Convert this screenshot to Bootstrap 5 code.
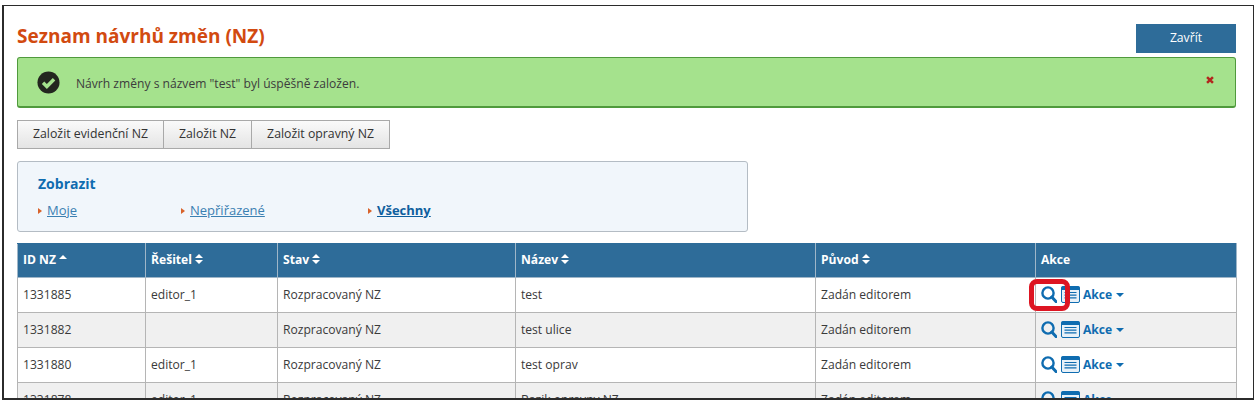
<!DOCTYPE html>
<html lang="cs">
<head>
  <meta charset="UTF-8" />
  <meta name="viewport" content="width=device-width, initial-scale=1.0"/>
  <title>Seznam návrhů změn</title>
  <link href="https://cdn.jsdelivr.net/npm/bootstrap@5.3.3/dist/css/bootstrap.min.css" rel="stylesheet" />
  <style>
    html, body { height: 403px; overflow: hidden; }
    body {
      background: #fff;
      font-family: "Open Sans", sans-serif;
      font-size: 12.1px;
      color: #333;
      padding: 5px 4px 3px 2px;
    }
    .frame {
      height: 395px;
      border: 1px solid #2b2b2b;
      border-width: 1px 1px 2px 2px;
      padding: 18px 17px 0 13px;
      overflow: hidden;
    }
    .page-title {
      font-size: 19px;
      font-weight: 700;
      color: #d24a10;
      margin: 0;
      line-height: 24px;
    }
    .close-btn {
      width: 100px;
      height: 29px;
      background: #2e6c99;
      color: #fff;
      border: 0;
      border-radius: 0;
      font-size: 12.2px;
      padding: 0;
    }
    .ok-alert {
      height: 51px;
      margin: 4px 0 12px;
      background: #a5e28d;
      border: 1px solid #4f9a3c;
      border-bottom-width: 2px;
      border-radius: 3px;
      padding: 0 21px 0 19px;
      color: #3c3c3c;
    }
    .ok-alert svg { flex: none; }
    .ok-text { margin-left: 16px; padding-top: 4px; }
    .ok-close { margin-bottom: 5px; }
    .add-group .btn {
      height: 29px;
      padding: 0 15px;
      font-size: 12.3px;
      color: #333;
      background: linear-gradient(#fafafa, #e4e4e4);
      border: 1px solid #a9a9a9;
      border-radius: 0;
    }
    .add-group .btn + .btn { margin-left: -1px; }
    .filter-box {
      width: 731px;
      height: 71px;
      margin: 12px 0 11px;
      background: #f1f6fb;
      border: 1px solid #b4bcc4;
      border-radius: 3px;
      padding: 13px 20px 0;
    }
    .filter-title {
      font-size: 14px;
      font-weight: 700;
      color: #0f6cb0;
      line-height: 18px;
      margin-bottom: 8px;
    }
    .filter-item { font-size: 13px; line-height: 18px; }
    .filter-item a { color: #3b80b2; }
    .filter-item a.active-link { color: #0f5f9e; font-weight: 700; }
    .filter-item::before {
      content: "";
      display: inline-block;
      border-left: 4px solid #d8622a;
      border-top: 3px solid transparent;
      border-bottom: 3px solid transparent;
      margin-right: 5px;
      vertical-align: 1px;
    }
    .w-first { width: 143px; }
    .w-second { width: 187px; }
    .nz-table {
      table-layout: fixed;
      width: 1219px;
      margin: 0;
      font-size: 12.1px;
      color: #3a3a3a;
      border-collapse: collapse;
    }
    .nz-table th {
      background: #2e6c99;
      color: #fff;
      height: 34px;
      padding: 0 5px;
      font-weight: 700;
      border: 1px solid #9fb6c8;
      border-top-color: #2e6c99;
      vertical-align: middle;
    }
    .nz-table td {
      height: 35px;
      padding: 0 5px;
      border: 1px solid #b5b5b5;
      vertical-align: middle;
      background: #fff;
    }
    .nz-table tr.alt td { background: #f0f0f0; }
    .sort-ic { display: inline-block; margin-left: 0; vertical-align: 0; }
    .act-cell { position: relative; white-space: nowrap; }
    .act-link {
      color: #0f6cb0;
      font-weight: 700;
      text-decoration: none;
      margin-left: 3px;
    }
    .act-list { margin-left: 4px; }
    .act-caret {
      display: inline-block;
      border-top: 4px solid #0f6cb0;
      border-left: 4px solid transparent;
      border-right: 4px solid transparent;
      margin-left: 4px;
      margin-top: 1px;
    }
    .red-mark {
      position: absolute;
      left: -12px;
      top: -7px;
      width: 41px;
      height: 32px;
      border: 5px solid #dd1522;
      border-radius: 8px;
    }
  </style>
</head>
<body>
  <svg width="0" height="0" class="position-absolute">
    <symbol id="ic-search" viewBox="0 0 16 17">
      <circle cx="7" cy="7" r="5.6" fill="none" stroke="#0f6cb0" stroke-width="2.4"/>
      <path d="M10.8 11 15 15.6" stroke="#0f6cb0" stroke-width="3" stroke-linecap="round"/>
    </symbol>
    <symbol id="ic-list" viewBox="0 0 19 17">
      <rect x=".5" y=".5" width="18" height="16" rx="1.5" fill="#e8f1f8" stroke="#0f6cb0"/>
      <rect x=".5" y=".5" width="18" height="3.5" fill="#0f6cb0"/>
      <path d="M3.5 6.5h12M3.5 9.2h12M3.5 11.9h12" stroke="#0f6cb0" stroke-width="1.2"/>
    </symbol>
    <symbol id="ic-sort" viewBox="0 0 8 10">
      <path d="M4 0 8 4H0ZM0 6h8L4 10Z" fill="#fff"/>
    </symbol>
    <symbol id="ic-up" viewBox="0 0 8 10">
      <path d="M4 1 8 5H0Z" fill="#fff"/>
    </symbol>
  </svg>

  <div class="frame">
    <div class="d-flex justify-content-between align-items-start">
      <h1 class="page-title">Seznam návrhů změn (NZ)</h1>
      <button class="btn close-btn" type="button">Zavřít</button>
    </div>

    <div class="ok-alert d-flex align-items-center">
      <svg width="23" height="23" viewBox="0 0 24 24">
        <circle cx="12" cy="12" r="11.5" fill="#23261f"/>
        <path d="M6.3 12.3 10.3 16.2 17.8 8.6" fill="none" stroke="#a5e28d" stroke-width="3.6"/>
      </svg>
      <span class="ok-text flex-grow-1">Návrh změny s názvem "test" byl úspěšně založen.</span>
      <svg class="ok-close" width="8" height="8" viewBox="0 0 9 9">
        <path d="M1.2 1.2 7.8 7.8M7.8 1.2 1.2 7.8" stroke="#b3261e" stroke-width="2.8"/>
      </svg>
    </div>

    <div class="add-group d-flex">
      <button class="btn" type="button">Založit evidenční NZ</button>
      <button class="btn" type="button">Založit NZ</button>
      <button class="btn" type="button">Založit opravný NZ</button>
    </div>

    <div class="filter-box">
      <div class="filter-title">Zobrazit</div>
      <div class="d-flex">
        <div class="filter-item w-first"><a href="#">Moje</a></div>
        <div class="filter-item w-second"><a href="#">Nepřiřazené</a></div>
        <div class="filter-item"><a href="#" class="active-link">Všechny</a></div>
      </div>
    </div>

    <table class="nz-table">
      <colgroup>
        <col style="width:128px"><col style="width:132px"><col style="width:238px">
        <col style="width:300px"><col style="width:220px"><col style="width:201px">
      </colgroup>
      <thead>
        <tr>
          <th>ID NZ <svg class="sort-ic" width="8" height="10"><use href="#ic-up"/></svg></th>
          <th>Řešitel <svg class="sort-ic" width="8" height="10"><use href="#ic-sort"/></svg></th>
          <th>Stav <svg class="sort-ic" width="8" height="10"><use href="#ic-sort"/></svg></th>
          <th>Název <svg class="sort-ic" width="8" height="10"><use href="#ic-sort"/></svg></th>
          <th>Původ <svg class="sort-ic" width="8" height="10"><use href="#ic-sort"/></svg></th>
          <th>Akce</th>
        </tr>
      </thead>
      <tbody id="rows"></tbody>
    </table>
  </div>

  <script>
    const rows = [
      ["1331885", "editor_1", "Rozpracovaný NZ", "test", "Zadán editorem"],
      ["1331882", "", "Rozpracovaný NZ", "test ulice", "Zadán editorem"],
      ["1331880", "editor_1", "Rozpracovaný NZ", "test oprav", "Zadán editorem"],
      ["1331878", "editor_1", "Rozpracovaný NZ", "Bazik opravny NZ", "Zadán editorem"]
    ];
    const tbody = document.getElementById("rows");
    rows.forEach((r, i) => {
      const tr = document.createElement("tr");
      if (i % 2) tr.className = "alt";
      r.forEach(v => {
        const td = document.createElement("td");
        td.textContent = v;
        tr.appendChild(td);
      });
      const act = document.createElement("td");
      act.innerHTML = `<div class="act-cell d-flex align-items-center">
        <svg width="16" height="17"><use href="#ic-search"/></svg>
        <svg class="act-list" width="19" height="17"><use href="#ic-list"/></svg>
        <a href="#" class="act-link">Akce</a><span class="act-caret"></span>
        ${i === 0 ? '<span class="red-mark"></span>' : ''}
      </div>`;
      tr.appendChild(act);
      tbody.appendChild(tr);
    });
  </script>
</body>
</html>
